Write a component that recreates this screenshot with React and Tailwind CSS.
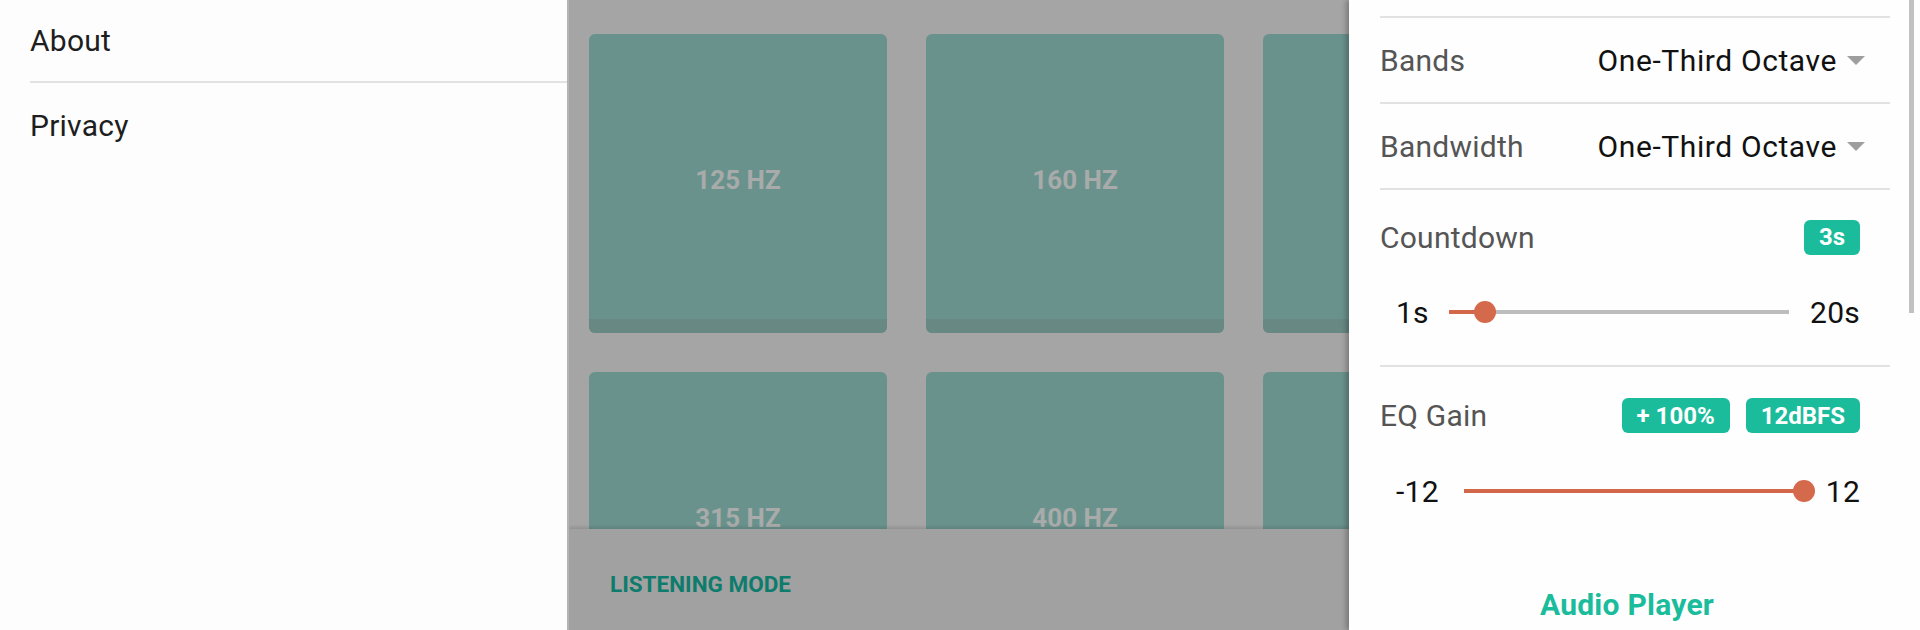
import React from "react";

const bands = ["125 HZ", "160 HZ", "200 HZ", "315 HZ", "400 HZ", "500 HZ"];

const Divider = ({ className = "" }) => (
  <div className={`h-[2px] bg-[#e2e2e2] ${className}`} />
);

const Badge = ({ children }) => (
  <span className="rounded-[6px] bg-[#1abc9c] px-[15px] h-[35px] flex items-center text-[24px] font-bold text-white leading-none tracking-normal">
    {children}
  </span>
);

const Dropdown = ({ label, value }) => (
  <div className="flex items-center justify-between h-[84px] pr-[25px]">
    <span className="text-[30px] text-[#555555]">{label}</span>
    <div className="flex items-center gap-[10px]">
      <span className="text-[30px] text-[#111111] tracking-[0.02em]">{value}</span>
      <span className="w-0 h-0 border-l-[9px] border-r-[9px] border-t-[9px] border-l-transparent border-r-transparent border-t-[#9e9e9e]" />
    </div>
  </div>
);

const Slider = ({ min, max, pos, left, right }) => (
  <div className="flex items-center h-[40px] pl-[16px] pr-[30px]">
    <span className="text-[30px] text-[#111111]">{min}</span>
    <div className={`relative flex-1 h-[4px] bg-[#bdbdbd] ${left} ${right}`}>
      <div className={`absolute left-0 top-0 h-full bg-[#d2674a] ${pos.w}`} />
      <div
        className={`absolute top-1/2 w-[22px] h-[22px] -translate-x-1/2 -translate-y-1/2 rounded-full bg-[#d4694c] ${pos.l}`}
      />
    </div>
    <span className="text-[30px] text-[#111111]">{max}</span>
  </div>
);

export default function App() {
  return (
    <div className="flex h-[630px] w-[1920px] overflow-hidden font-['Roboto',sans-serif]">
      {/* left drawer */}
      <aside className="w-[569px] shrink-0 bg-[#fdfdfd] border-r-2 border-[#b4b4b4] tracking-[0.015em]">
        <div className="h-[81px] flex items-center pl-[30px] text-[30px] text-[#1e1e1e]">
          About
        </div>
        <Divider className="ml-[30px]" />
        <div className="h-[84px] flex items-center pl-[30px] text-[30px] text-[#1e1e1e]">
          Privacy
        </div>
      </aside>

      {/* dimmed app content */}
      <main className="flex-1 flex flex-col bg-[#a5a5a5] overflow-hidden">
        <div className="h-[529px] overflow-hidden pt-[34px] pl-[20px]">
          <div className="grid grid-cols-[repeat(3,298px)] gap-x-[39px] gap-y-[39px] w-max">
            {bands.map((b) => (
              <div
                key={b}
                className="h-[299px] rounded-[6px] overflow-hidden flex flex-col bg-[#6a928d]"
              >
                <div className="flex-1 flex items-center justify-center pt-[8px] text-[26px] font-bold text-[#a9abaa]">
                  {b}
                </div>
                <div className="h-[14px] bg-[#688884]" />
              </div>
            ))}
          </div>
        </div>
        <div className="flex-1 flex items-center pl-[41px] pt-[10px] bg-[#a1a1a1] shadow-[0_-2px_3px_rgba(0,0,0,0.12)] z-10">
          <span className="text-[22.5px] font-bold text-[#0e7c6d]">
            LISTENING MODE
          </span>
        </div>
      </main>

      {/* right settings drawer */}
      <section className="relative w-[571px] shrink-0 bg-[#fefefe] pl-[31px] pr-[30px] shadow-[-3px_0_5px_rgba(0,0,0,0.25)] z-20 tracking-[0.015em]">
        <div className="h-[16px]" />
        <Divider />
        <Dropdown label="Bands" value="One-Third Octave" />
        <Divider />
        <Dropdown label="Bandwidth" value="One-Third Octave" />
        <Divider />

        <div className="pt-[29px] pb-[33px]">
          <div className="flex items-center justify-between h-[36px] pr-[30px]">
            <span className="text-[30px] text-[#555555]">Countdown</span>
            <Badge>3s</Badge>
          </div>
          <div className="mt-[37px]">
            <Slider
              min="1s"
              max="20s"
              left="ml-[20px]"
              right="mr-[21px]"
              pos={{ w: "w-[10.5%]", l: "left-[10.5%]" }}
            />
          </div>
        </div>
        <Divider />

        <div className="pt-[31px]">
          <div className="flex items-center justify-between h-[35px] pr-[30px]">
            <span className="text-[30px] text-[#555555]">EQ Gain</span>
            <div className="flex gap-[16px]">
              <Badge>+ 100%</Badge>
              <Badge>12dBFS</Badge>
            </div>
          </div>
          <div className="mt-[38px]">
            <Slider
              min="-12"
              max="12"
              left="ml-[25px]"
              right="mr-[22px]"
              pos={{ w: "w-full", l: "left-full" }}
            />
          </div>
          <div className="mt-[73px] h-[40px] flex items-center justify-center pr-[16px] text-[30px] font-bold text-[#1abc9c]">
            Audio Player
          </div>
        </div>

        <div className="absolute right-[6px] top-0 w-[5px] h-[313px] bg-[#c1c1c1]" />
      </section>
    </div>
  );
}
